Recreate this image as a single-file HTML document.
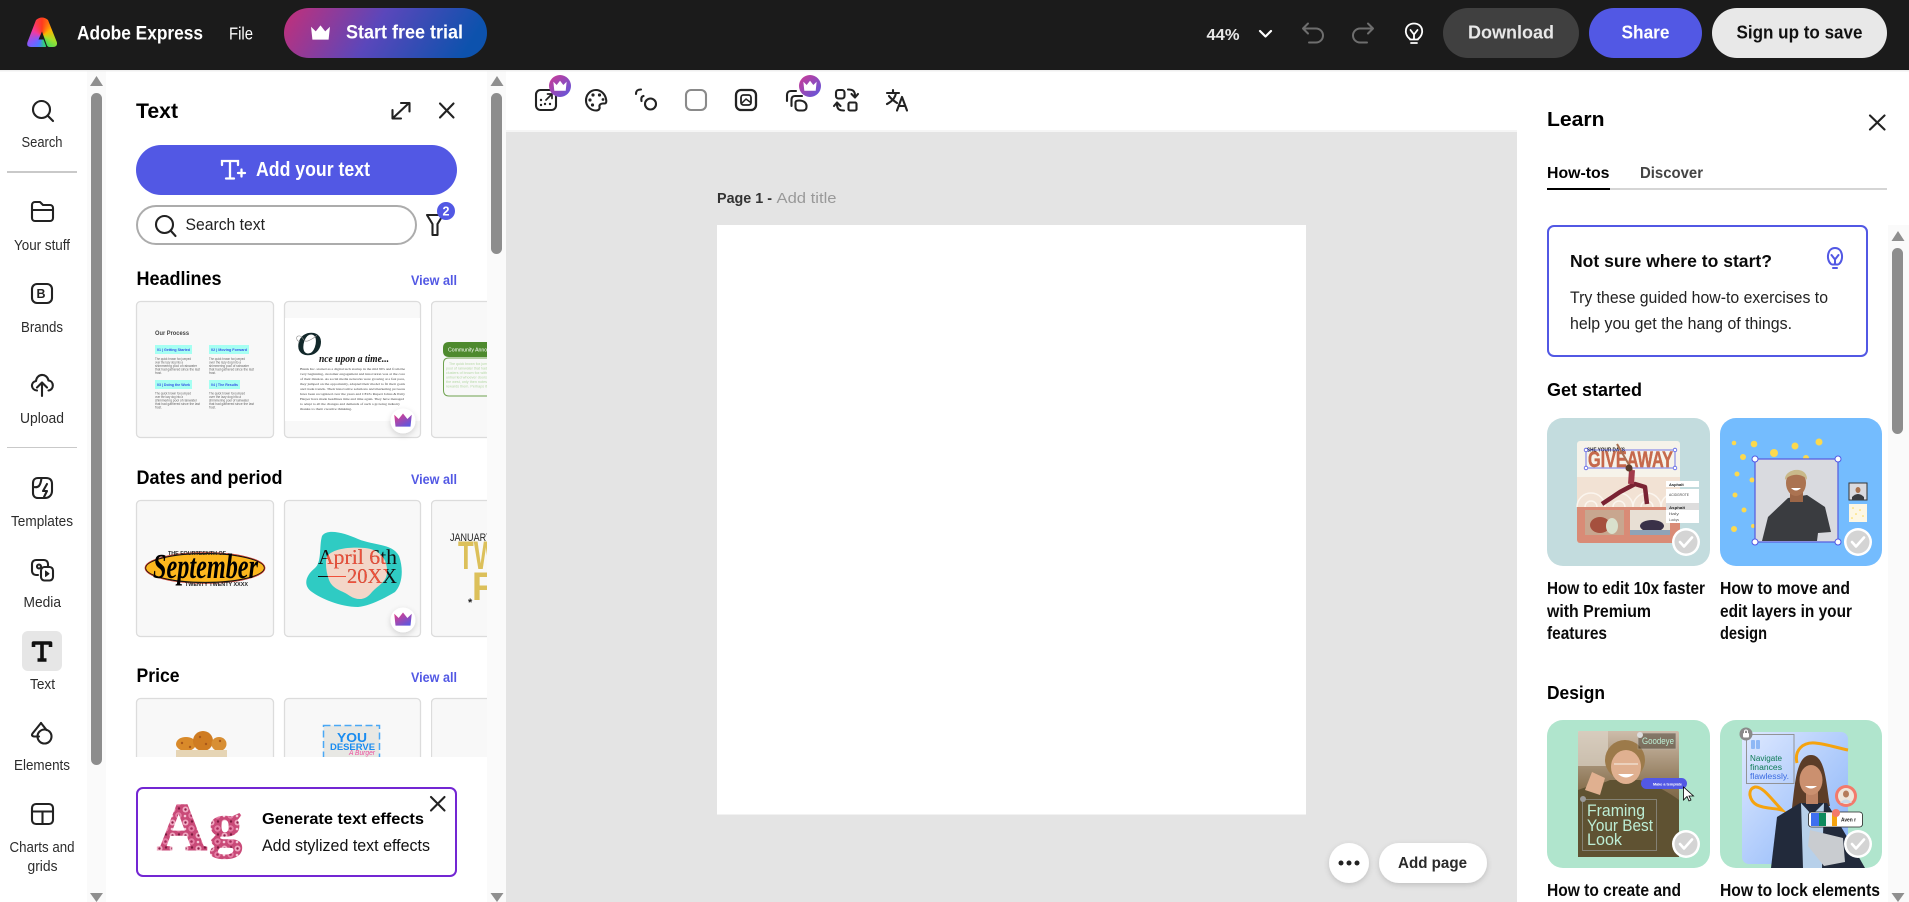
<!DOCTYPE html>
<html lang="en"><head><meta charset="utf-8"><title>Adobe Express</title>
<style>
html,body{margin:0;padding:0;width:1909px;height:902px;overflow:hidden;background:#fff}
svg{display:block}
text{font-family:"Liberation Sans",sans-serif;fill:#222}
.b{font-weight:700}
text.w,.w{fill:#fff}
text.l{font-size:14.5px;fill:#2c2c2c}
text.h{font-size:19px;font-weight:700;fill:#000}
text.va{font-size:13.5px;font-weight:700;fill:#5258e4}
text.c{font-size:17.5px;font-weight:700;fill:#0a0a0a}
.ic{fill:none;stroke:#222;stroke-width:2.1;stroke-linecap:round;stroke-linejoin:round}
.card{fill:#f8f8f8;stroke:#dcdcdc;stroke-width:1.3}
.tiny text{font-size:3.4px;fill:#666}
.tiny2 text{font-size:3.4px;fill:#444;font-family:"Liberation Serif",serif}
.tiny3 text{font-size:3.2px;fill:#b4d8a4}
</style></head><body>
<svg width="1909" height="902" viewBox="0 0 1909 902" xmlns="http://www.w3.org/2000/svg">
<defs>
<linearGradient id="g1" x1="0" x2="1" y1="0" y2=".15"><stop offset="0" stop-color="#c42f78"/><stop offset=".5" stop-color="#5a47bb"/><stop offset="1" stop-color="#0d52ad"/></linearGradient>
<linearGradient id="g2" x1="0" x2="1" y1="0" y2="1"><stop offset="0" stop-color="#cf3a93"/><stop offset="1" stop-color="#5a58e0"/></linearGradient>
<linearGradient id="g3" x1="0" x2=".8" y1="0" y2="1"><stop offset="0" stop-color="#ea3a82"/><stop offset="1" stop-color="#5a58e0"/></linearGradient>
<linearGradient id="ph" x1="0" x2="0" y1="0" y2="1"><stop offset="0" stop-color="#cdbcaa"/><stop offset=".45" stop-color="#8a7352"/><stop offset="1" stop-color="#3d2f1d"/></linearGradient>
<linearGradient id="bl" x1="0" x2="1" y1="0" y2="1"><stop offset="0" stop-color="#dfe9ff"/><stop offset="1" stop-color="#86b2f8"/></linearGradient>
<pattern id="fl" width="13" height="13" patternUnits="userSpaceOnUse"><rect width="13" height="13" fill="#c94a78"/><circle cx="3.500" cy="3.500" r="3" fill="#f0a9c2"/><circle cx="3.500" cy="3.500" r="1.200" fill="#8f1f4a"/><circle cx="9.500" cy="9.500" r="3.200" fill="#e57fa5"/><circle cx="9.500" cy="9.500" r="1.300" fill="#a82a5a"/><circle cx="10" cy="2.500" r="1.200" fill="#7d1b40"/><circle cx="3" cy="10" r="1.300" fill="#f5c7d7"/></pattern>
<path id="cr" d="M-7-5-3.500-1.600 0-6 3.500-1.600 7-5 6 4.500H-6Z" stroke-linejoin="round"/>
<clipPath id="peach"><path d="M327 556C335 548 350 547 365 548C378 549 387 558 387 570C388 582 378 585 372 592C366 600 358 601 350 596C342 590 333 590 329 580C326 572 325 562 327 556Z"/></clipPath>
<clipPath id="col3"><rect x="431" y="290" width="56" height="480"/></clipPath>
<filter id="sh" x="-50%" y="-50%" width="200%" height="200%"><feDropShadow dx="0" dy="2" stdDeviation="3" flood-color="#000" flood-opacity=".16"/></filter>
<g id="chk"><circle r="14" fill="#fff"/><circle r="11.500" fill="#d4d4d4"/><path d="M-6 0-2 4.500 6-4.500" fill="none" stroke="#fff" stroke-width="2.600" stroke-linecap="round" stroke-linejoin="round"/></g>
</defs>

<rect width="1909" height="902" fill="#fff"/>
<!-- canvas -->
<rect x="506" y="132" width="1011" height="770" fill="#e4e4e4"/>
<rect x="506" y="130" width="1011" height="2" fill="#f5f5f5"/>
<rect x="717" y="225" width="589" height="589.500" fill="#fff"/>
<text x="717" y="203" class="b" font-size="15" style="fill:#333" textLength="55" lengthAdjust="spacingAndGlyphs">Page 1 -</text>
<text x="776.500" y="203" font-size="15" style="fill:#999" textLength="60" lengthAdjust="spacingAndGlyphs">Add title</text>
<circle cx="1349" cy="863" r="20" fill="#fff" filter="url(#sh)"/><circle cx="1341" cy="863" r="2.500" fill="#222"/><circle cx="1349" cy="863" r="2.500" fill="#222"/><circle cx="1357" cy="863" r="2.500" fill="#222"/>
<rect x="1379" y="843" width="108" height="40" rx="20" fill="#fff" filter="url(#sh)"/>
<text x="1398" y="868" class="b" font-size="16" style="fill:#2a2a2a" textLength="69" lengthAdjust="spacingAndGlyphs">Add page</text>

<!-- left rail -->
<rect x="87" y="71" width="19" height="831" fill="#fafafa"/>
<path d="M90 86 96.500 76 103 86Z" fill="#8f8f8f"/>
<rect x="91" y="93" width="11" height="672" rx="5.500" fill="#8d8d8d"/>
<path d="M90 893 96.500 902 103 893Z" fill="#8f8f8f"/>
<g class="ic">
<circle cx="41.500" cy="109.500" r="8.500"/><path d="M48 116 53 121"/>
<path d="M32 217V205a3 3 0 0 1 3-3h5l3 3h7a3 3 0 0 1 3 3v10a3 3 0 0 1-3 3H35a3 3 0 0 1-3-3zM32 210H53"/>
<path d="M37 284h10a5 5 0 0 1 5 5v9a5 5 0 0 1-5 5H37a5 5 0 0 1-5-5v-9a5 5 0 0 1 5-5z"/>
<path d="M37 390.500C31 390 30 382.500 36 381C37 373 47 373 48.500 380.500C54 381 54.500 389.500 48.500 390.500M42 396V382.500M37 387.500 42 382.500 47 387.500"/>
<path d="M38 478h8c4 0 6 2 6 6v7c0 4-3 7-7 7h-7c-3 0-5-2-5-5v-10c0-3 2-5 5-5zM33.500 487c5 1 7-1 8-9M47 484l-4 7h4l-3 6" />
<path d="M38 575h-2a4 4 0 0 1-4-4v-7a4 4 0 0 1 4-4h8a4 4 0 0 1 4 4v2"/><circle cx="39" cy="566.500" r="2"/><rect x="41" y="567" width="12" height="13.500" rx="3.500"/><path d="M45.500 571 49 573.700 45.500 576.500Z" fill="#222" stroke-width="1"/>
<path d="M41 723 32.500 733.500Q31 736 34 736.500H39"/><path d="M41 723 46.500 730"/><circle cx="44.500" cy="736.500" r="7"/>
<rect x="32" y="804" width="21" height="20" rx="4"/><path d="M32 811.500H53M42.500 811.500V824"/>
</g>
<text x="36.500" y="298" class="b" font-size="13" style="fill:#222" textLength="9" lengthAdjust="spacingAndGlyphs">B</text>
<rect x="7" y="171" width="70" height="2" fill="#c9c9c9"/>
<rect x="7" y="447" width="70" height="1" fill="#c9c9c9"/>
<rect x="22" y="631" width="40" height="40" rx="6" fill="#e6e6e6"/>
<path d="M33.500 647V643H50.500V647M42 643V659.500M37.500 660H46.500" fill="none" stroke="#111" stroke-width="3.600" stroke-linejoin="round"/>
<text x="21.500" y="147" class="l" textLength="41" lengthAdjust="spacingAndGlyphs">Search</text>
<text x="14" y="250" class="l" textLength="56" lengthAdjust="spacingAndGlyphs">Your stuff</text>
<text x="21" y="332" class="l" textLength="42" lengthAdjust="spacingAndGlyphs">Brands</text>
<text x="20" y="423" class="l" textLength="44" lengthAdjust="spacingAndGlyphs">Upload</text>
<text x="11" y="526" class="l" textLength="62" lengthAdjust="spacingAndGlyphs">Templates</text>
<text x="23.500" y="607" class="l" textLength="37.500" lengthAdjust="spacingAndGlyphs">Media</text>
<text x="30" y="689" class="l" textLength="25" lengthAdjust="spacingAndGlyphs">Text</text>
<text x="14" y="770" class="l" textLength="56" lengthAdjust="spacingAndGlyphs">Elements</text>
<text x="9.500" y="852" class="l" textLength="65" lengthAdjust="spacingAndGlyphs">Charts and</text>
<text x="27.500" y="871" class="l" textLength="30" lengthAdjust="spacingAndGlyphs">grids</text>

<!-- panel -->
<text x="136" y="118" class="b" font-size="21" style="fill:#000" textLength="42" lengthAdjust="spacingAndGlyphs">Text</text>
<path d="M393 118 409 103M401 103H409.500V111.500M392.500 110V118.500H401" class="ic" stroke-width="2.300"/>
<path d="M440 103.500 453.500 117.500M453.500 103.500 440 117.500" class="ic" stroke-width="2.300"/>
<rect x="136" y="145" width="321" height="50" rx="25" fill="#5258e4"/>
<path d="M222 165V161H238V165M230 161V178M226 178.500H234M238 173H245M241.500 169.500V176.500" fill="none" stroke="#fff" stroke-width="2.300" stroke-linecap="round"/>
<text x="256" y="176" class="b w" font-size="20" textLength="114" lengthAdjust="spacingAndGlyphs">Add your text</text>
<rect x="137" y="206" width="279" height="38" rx="19" fill="#fff" stroke="#acacac" stroke-width="2"/>
<circle cx="164.500" cy="224.500" r="8.500" class="ic" stroke-width="2.200"/><path d="M171 231 175.500 236" class="ic" stroke-width="2.200"/>
<text x="185.500" y="230" font-size="16.500" style="fill:#222" textLength="79.500" lengthAdjust="spacingAndGlyphs">Search text</text>
<path d="M427 215H443L437.500 224V235H432.500V224Z" class="ic"/>
<circle cx="446" cy="211" r="9" fill="#5258e4"/>
<text x="442.500" y="215.500" class="b w" font-size="12.500">2</text>

<text x="136.500" y="285" class="h" textLength="85" lengthAdjust="spacingAndGlyphs">Headlines</text>
<text x="411" y="285" class="va" textLength="46" lengthAdjust="spacingAndGlyphs">View all</text>
<text x="136.500" y="484" class="h" textLength="146" lengthAdjust="spacingAndGlyphs">Dates and period</text>
<text x="411" y="484" class="va" textLength="46" lengthAdjust="spacingAndGlyphs">View all</text>
<text x="136.500" y="682" class="h" textLength="43" lengthAdjust="spacingAndGlyphs">Price</text>
<text x="411" y="682" class="va" textLength="46" lengthAdjust="spacingAndGlyphs">View all</text>

<!-- row 1 -->
<rect x="136.500" y="301.500" width="137" height="136" rx="4" class="card"/>
<rect x="284.500" y="301.500" width="136" height="136" rx="4" class="card"/>
<g clip-path="url(#col3)"><rect x="431.500" y="301.500" width="136" height="136" rx="4" class="card"/></g>
<text x="155" y="335" class="b" font-size="6" style="fill:#444" textLength="34" lengthAdjust="spacingAndGlyphs">Our Process</text>
<g fill="#a6fff2"><rect x="155" y="345" width="37" height="9"/><rect x="209" y="345" width="40" height="9"/><rect x="155" y="380" width="37" height="9"/><rect x="209" y="380" width="31" height="9"/></g>
<g font-size="3.700" style="font-weight:700">
<text x="157" y="351" style="fill:#3553e8" textLength="33" lengthAdjust="spacingAndGlyphs">01 | Getting Started</text>
<text x="211" y="351" style="fill:#3553e8" textLength="36" lengthAdjust="spacingAndGlyphs">02 | Moving Forward</text>
<text x="157" y="386" style="fill:#3553e8" textLength="33" lengthAdjust="spacingAndGlyphs">03 | Doing the Work</text>
<text x="211" y="386" style="fill:#3553e8" textLength="27" lengthAdjust="spacingAndGlyphs">04 | The Results</text>
</g>
<g class="tiny">
<text x="155" y="360" textLength="36" lengthAdjust="spacingAndGlyphs">The quick brown fox jumped</text>
<text x="155" y="363.500" textLength="28" lengthAdjust="spacingAndGlyphs">over the lazy dog into a</text>
<text x="155" y="367" textLength="42" lengthAdjust="spacingAndGlyphs">shimmering pool of rainwater</text>
<text x="155" y="370.500" textLength="45" lengthAdjust="spacingAndGlyphs">that had gathered since the last</text>
<text x="155" y="374" textLength="7" lengthAdjust="spacingAndGlyphs">frost.</text>
<text x="209" y="360" textLength="36" lengthAdjust="spacingAndGlyphs">The quick brown fox jumped</text>
<text x="209" y="363.500" textLength="32" lengthAdjust="spacingAndGlyphs">over the lazy dog into a</text>
<text x="209" y="367" textLength="40" lengthAdjust="spacingAndGlyphs">shimmering pool of rainwater</text>
<text x="209" y="370.500" textLength="45" lengthAdjust="spacingAndGlyphs">that had gathered since the last</text>
<text x="209" y="374" textLength="7" lengthAdjust="spacingAndGlyphs">frost.</text>
<text x="155" y="394.500" textLength="36" lengthAdjust="spacingAndGlyphs">The quick brown fox jumped</text>
<text x="155" y="398" textLength="28" lengthAdjust="spacingAndGlyphs">over the lazy dog into a</text>
<text x="155" y="401.500" textLength="42" lengthAdjust="spacingAndGlyphs">shimmering pool of rainwater</text>
<text x="155" y="405" textLength="45" lengthAdjust="spacingAndGlyphs">that had gathered since the last</text>
<text x="155" y="408.500" textLength="7" lengthAdjust="spacingAndGlyphs">frost.</text>
<text x="209" y="394.500" textLength="36" lengthAdjust="spacingAndGlyphs">The quick brown fox jumped</text>
<text x="209" y="398" textLength="32" lengthAdjust="spacingAndGlyphs">over the lazy dog into a</text>
<text x="209" y="401.500" textLength="40" lengthAdjust="spacingAndGlyphs">shimmering pool of rainwater</text>
<text x="209" y="405" textLength="45" lengthAdjust="spacingAndGlyphs">that had gathered since the last</text>
<text x="209" y="408.500" textLength="7" lengthAdjust="spacingAndGlyphs">frost.</text>
</g>
<rect x="285" y="318" width="135" height="103" fill="#fff"/>
<text x="297" y="355" font-size="34" style="font-family:'Liberation Serif',serif;font-style:italic;fill:#12282a" class="b" textLength="25" lengthAdjust="spacingAndGlyphs">O</text>
<path d="M300 342C295 340 296 335 300 336C304 337 303 344 310 340C316 337 318 334 316 336" fill="none" stroke="#888" stroke-width=".6"/>
<text x="319" y="362" font-size="10" style="font-family:'Liberation Serif',serif;font-style:italic;fill:#111" class="b" textLength="70" lengthAdjust="spacingAndGlyphs">nce upon a time...</text>
<g class="tiny2">
<text x="300" y="370" textLength="105" lengthAdjust="spacingAndGlyphs">Blank Inc. started as a digital tech startup in the mid 90's and from the</text>
<text x="300" y="375" textLength="105" lengthAdjust="spacingAndGlyphs">very beginning, customer engagement and innovation was at the core</text>
<text x="300" y="380" textLength="105" lengthAdjust="spacingAndGlyphs">of their mission. As social media networks were growing at a fast pace,</text>
<text x="300" y="385" textLength="105" lengthAdjust="spacingAndGlyphs">they jumped on the opportunity, adapted their model to fit their goals</text>
<text x="300" y="390" textLength="105" lengthAdjust="spacingAndGlyphs">and trade trends. Their innovative solutions and marketing prowess</text>
<text x="300" y="395" textLength="105" lengthAdjust="spacingAndGlyphs">have been recognized over the years and CEO's Rupert Johns &amp; Patty</text>
<text x="300" y="400" textLength="104" lengthAdjust="spacingAndGlyphs">Harper have made headlines time and time again. They have managed</text>
<text x="300" y="405" textLength="100" lengthAdjust="spacingAndGlyphs">to adapt to all the changes and demands of such a growing industry</text>
<text x="300" y="410" textLength="52" lengthAdjust="spacingAndGlyphs">thanks to their creative thinking.</text>
</g>
<g clip-path="url(#col3)">
<path d="M449 342H490V357H449Q443 357 443 351V348Q443 342 449 342Z" fill="#4e8a2e"/>
<text x="448" y="351.500" font-size="5" class="w" textLength="42" lengthAdjust="spacingAndGlyphs">Community Annou</text>
<path d="M490 358H449Q443.500 358 443.500 363V390Q443.500 396 449 396H490" fill="none" stroke="#6ea24e" stroke-width="1"/>
<g class="tiny3">
<text x="449" y="365" textLength="38" lengthAdjust="spacingAndGlyphs">The quick brown fox jum</text>
<text x="446" y="369.500" textLength="41" lengthAdjust="spacingAndGlyphs">pool of rainwater that had</text>
<text x="446" y="374" textLength="41" lengthAdjust="spacingAndGlyphs">clusters of brown fox with</text>
<text x="446" y="378.500" textLength="41" lengthAdjust="spacingAndGlyphs">unhurried whoever doors</text>
<text x="446" y="383" textLength="41" lengthAdjust="spacingAndGlyphs">the west, only then notes</text>
<text x="446" y="387.500" textLength="41" lengthAdjust="spacingAndGlyphs">rewards them. Perhaps it</text>
</g>
</g>
<circle cx="403" cy="421" r="12.500" fill="#fff" filter="url(#sh)"/>
<use href="#cr" transform="translate(403 421) scale(1.250)" fill="url(#g3)"/>

<!-- row 2 -->
<rect x="136.500" y="500.500" width="137" height="136" rx="4" class="card"/>
<rect x="284.500" y="500.500" width="136" height="136" rx="4" class="card"/>
<g clip-path="url(#col3)"><rect x="431.500" y="500.500" width="136" height="136" rx="4" class="card"/></g>
<ellipse cx="205" cy="568" rx="59.500" ry="14.500" fill="#fdb71e" stroke="#111" stroke-width="1.200"/>
<ellipse cx="205" cy="568" rx="60" ry="15.500" fill="none" stroke="#c83a2a" stroke-width=".7"/>
<text x="168" y="555" class="b" font-size="5.500" style="fill:#222" textLength="58" lengthAdjust="spacingAndGlyphs">THE FOURTEENTH OF</text>
<text x="153" y="578" font-size="35" style="font-family:'Liberation Serif',serif;font-style:italic;fill:#000" class="b" textLength="105" lengthAdjust="spacingAndGlyphs">September</text>
<text x="185" y="586" class="b" font-size="5.500" style="fill:#222" textLength="63" lengthAdjust="spacingAndGlyphs">TWENTY TWENTY XXXX</text>
<path d="M322 536C327 528 345 533 358 539C375 546 392 543 399 556C404 570 402 585 395 592C385 598 370 606 358 607C340 607 320 598 312 592C303 586 305 576 315 568C322 562 319 546 322 536Z" fill="#2fcbc3"/>
<path d="M327 556C335 548 350 547 365 548C378 549 387 558 387 570C388 582 378 585 372 592C366 600 358 601 350 596C342 590 333 590 329 580C326 572 325 562 327 556Z" fill="#f3d6c8"/>
<g font-size="21">
<text x="318" y="564" style="font-family:'Liberation Serif',serif;fill:#111" textLength="79" lengthAdjust="spacingAndGlyphs">April 6th</text>
<text x="347" y="583" style="font-family:'Liberation Serif',serif;fill:#111" textLength="50" lengthAdjust="spacingAndGlyphs">20XX</text>
<rect x="318" y="576" width="28" height="1" fill="#111"/>
<g clip-path="url(#peach)">
<text x="318" y="564" style="font-family:'Liberation Serif',serif;fill:#f0503a" textLength="79" lengthAdjust="spacingAndGlyphs">April 6th</text>
<text x="347" y="583" style="font-family:'Liberation Serif',serif;fill:#f0503a" textLength="50" lengthAdjust="spacingAndGlyphs">20XX</text>
<rect x="318" y="576" width="28" height="1" fill="#f0503a"/>
</g></g>
<circle cx="403" cy="620" r="12.500" fill="#fff" filter="url(#sh)"/>
<use href="#cr" transform="translate(403 620) scale(1.250)" fill="url(#g3)"/>
<g clip-path="url(#col3)">
<text x="450" y="541" font-size="11" style="fill:#222" textLength="42" lengthAdjust="spacingAndGlyphs">JANUARY</text>
<text x="458" y="569" class="b" font-size="40" style="fill:#dcc05a" textLength="40" lengthAdjust="spacingAndGlyphs">TW</text>
<text x="472" y="600" class="b" font-size="40" style="fill:#dcc05a" textLength="22" lengthAdjust="spacingAndGlyphs">F</text>
<text x="468" y="606" class="b" font-size="11" style="fill:#222">*</text>
</g>

<!-- row 3 -->
<rect x="136.500" y="698.500" width="137" height="100" rx="4" class="card"/>
<rect x="284.500" y="698.500" width="136" height="100" rx="4" class="card"/>
<g clip-path="url(#col3)"><rect x="431.500" y="698.500" width="136" height="100" rx="4" class="card"/></g>
<ellipse cx="186" cy="744" rx="10" ry="7" fill="#d98a2a"/><ellipse cx="203" cy="741" rx="10" ry="10" fill="#cf7c22"/><ellipse cx="219" cy="744" rx="7.500" ry="7" fill="#d88f34"/>
<g fill="#a9581a"><circle cx="182" cy="743" r="1.200"/><circle cx="190" cy="747" r="1.200"/><circle cx="200" cy="737" r="1.200"/><circle cx="206" cy="744" r="1.200"/><circle cx="220" cy="741" r="1.200"/></g>
<rect x="176" y="750" width="51" height="8" fill="#e6d5b5"/>
<rect x="323.500" y="725.500" width="56" height="34" fill="#e8e8e4" stroke="#4aa8f5" stroke-width="1.500" stroke-dasharray="7 3.500"/>
<text x="337" y="742" class="b" font-size="13" style="fill:#1a8cf0" textLength="30" lengthAdjust="spacingAndGlyphs">YOU</text>
<text x="330" y="750" class="b" font-size="9.500" style="fill:#1a8cf0" textLength="45" lengthAdjust="spacingAndGlyphs">DESERVE</text>
<text x="349" y="755" font-size="7" style="fill:#ec4f9e;font-style:italic" textLength="26" lengthAdjust="spacingAndGlyphs">A Burger</text>
<!-- cover below row 3 -->
<rect x="106" y="757" width="381" height="145" fill="#fff"/>
<!-- promo -->
<rect x="137" y="788" width="319" height="88" rx="6" fill="#fff" stroke="#7326d3" stroke-width="2"/>
<text x="157" y="850" class="b" font-size="68" style="font-family:'Liberation Serif',serif;fill:url(#fl);stroke:url(#fl);stroke-width:1.500px" textLength="50" lengthAdjust="spacingAndGlyphs">A</text>
<text x="209" y="845" class="b" font-size="60" style="font-family:'Liberation Serif',serif;fill:url(#fl);stroke:url(#fl);stroke-width:1.500px" textLength="33" lengthAdjust="spacingAndGlyphs">g</text>
<text x="262" y="824" class="b" font-size="16" style="fill:#000" textLength="162" lengthAdjust="spacingAndGlyphs">Generate text effects</text>
<text x="262" y="851" font-size="16.500" style="fill:#111" textLength="168" lengthAdjust="spacingAndGlyphs">Add stylized text effects</text>
<path d="M431 797 444.500 810.500M444.500 797 431 810.500" class="ic" stroke-width="2.300"/>
<!-- panel scrollbar -->
<rect x="487" y="71" width="19" height="831" fill="#fafafa"/>
<path d="M490.500 86 497 76 503.500 86Z" fill="#8f8f8f"/>
<rect x="491" y="93" width="11" height="161" rx="5.500" fill="#8d8d8d"/>
<path d="M490.500 893 497 902 503.500 893Z" fill="#8f8f8f"/>

<!-- canvas toolbar icons -->
<g class="ic">
<rect x="536" y="90" width="20" height="20" rx="4.500"/><path d="M546 100 552 94M547.500 94H552V98.500" stroke-width="1.700"/><g fill="#222" stroke="none"><circle cx="541" cy="100" r="1.200"/><circle cx="545" cy="104" r="1.200"/><circle cx="541" cy="105" r="1.200"/><circle cx="550" cy="104" r="1.200"/></g>
<path d="M596 90C590 90 586 95 586 100.500C586 106 590.500 110.500 596 110.500C599 110.500 600 108.500 599.500 107C599 105 600.500 103.500 603 103.500H604.500C606 103.500 606.800 102 606 99C605 94 601 90 596 90Z"/><g fill="#222" stroke="none"><circle cx="593" cy="95" r="1.600"/><circle cx="599.500" cy="95" r="1.600"/><circle cx="590" cy="100" r="1.600"/><circle cx="603" cy="99.500" r="1.400"/><circle cx="592.500" cy="105" r="1.600"/></g>
<circle cx="650.500" cy="104" r="5.500"/><path d="M641 89.500C637 89.500 636 91 636 94M643.500 96C641.500 96.500 641 98.500 641.500 101"/>
<rect x="686" y="90" width="20" height="20" rx="5" stroke="#8a8a8a"/>
<rect x="736" y="90" width="20" height="20" rx="5" stroke-width="2.300"/><rect x="741" y="95" width="10" height="10" rx="2.500" stroke-width="1.800"/><path d="M742 103 746 99 750 102" stroke-width="1.500"/>
<path d="M796 91H791C788.500 91 787 92.500 787 95V101M802 96H795C792.500 96 791.500 97.500 791.500 100V106"/><path d="M799 100.500H799C805 100.500 806.500 104 806.500 106V107C806.500 109 805 110.500 803 110.500H799C797 110.500 795.500 109 795.500 107V102.500C795.500 101 797 100.500 799 100.500Z"/>
<rect x="836" y="90" width="8.500" height="8.500" rx="2.500"/><rect x="848.500" y="102.500" width="8" height="8" rx="1.500"/><path d="M848 89.500C853 89.500 855 91 855 96M851.500 94 855 97.500 858 94M844 110.500C839 110.500 837 109 837 104M840.500 106 837 102.500 834 106"/>
<path d="M887 93H899M893 90V93M896 93C895 99 891 102 887 104M889 96C891 99 894 101 897 103"/><path d="M897 110.500 902 97 907 110.500M899 106H905"/>
</g>
<circle cx="560" cy="86" r="11" fill="url(#g2)"/><use href="#cr" transform="translate(560 86.500) scale(.95)" fill="#fff"/>
<circle cx="810" cy="86" r="11" fill="url(#g2)"/><use href="#cr" transform="translate(810 86.500) scale(.95)" fill="#fff"/>

<!-- right panel -->
<rect x="1517" y="71" width="392" height="831" fill="#fff"/>
<text x="1547" y="126" class="b" font-size="20.500" style="fill:#000" textLength="57.500" lengthAdjust="spacingAndGlyphs">Learn</text>
<path d="M1870 115.500 1884.500 129.500M1884.500 115.500 1870 129.500" class="ic" stroke-width="2"/>
<text x="1547" y="178" class="b" font-size="16" style="fill:#000" textLength="62.500" lengthAdjust="spacingAndGlyphs">How-tos</text>
<text x="1640" y="178" class="b" font-size="16" style="fill:#444" textLength="63" lengthAdjust="spacingAndGlyphs">Discover</text>
<rect x="1547" y="188" width="340" height="2" fill="#d5d5d5"/>
<rect x="1547" y="188" width="63" height="2" fill="#000"/>
<rect x="1548" y="226" width="319" height="130" rx="6" fill="#fff" stroke="#5258e4" stroke-width="2"/>
<text x="1570" y="267" class="b" font-size="17.500" style="fill:#0a0a0a" textLength="202" lengthAdjust="spacingAndGlyphs">Not sure where to start?</text>
<text x="1570" y="303" font-size="16.500" style="fill:#222" textLength="258" lengthAdjust="spacingAndGlyphs">Try these guided how-to exercises to</text>
<text x="1570" y="329" font-size="16.500" style="fill:#222" textLength="222" lengthAdjust="spacingAndGlyphs">help you get the hang of things.</text>
<path d="M1831 264C1826 260 1827 248 1835 248C1843 248 1844 260 1839 264M1832 264.500H1838M1833 268H1837M1831.500 255 1835 259.500 1838.500 255M1835 259V264" fill="none" stroke="#5258e4" stroke-width="2" stroke-linecap="round" stroke-linejoin="round"/>
<text x="1547" y="396" class="b" font-size="18" style="fill:#000" textLength="95" lengthAdjust="spacingAndGlyphs">Get started</text>
<text x="1547" y="699" class="b" font-size="18" style="fill:#000" textLength="58" lengthAdjust="spacingAndGlyphs">Design</text>

<!-- card A -->
<rect x="1547" y="418" width="163" height="148" rx="16" fill="#c3dcde"/>
<rect x="1577" y="441" width="103" height="102" rx="3" fill="#f6f3ea"/>
<rect x="1577" y="477" width="103" height="30" fill="#f2e2d4"/>
<path d="M1577 507a14 14 0 0 1 28 0M1605 507a14 14 0 0 1 28 0M1633 507a14 14 0 0 1 28 0M1661 507a14 14 0 0 1 19-13M1585 507a6 6 0 0 1 12 0M1613 507a6 6 0 0 1 12 0M1641 507a6 6 0 0 1 12 0" fill="none" stroke="#fbf5ee" stroke-width="1.500"/>
<path d="M1577 507H1680V540a3 3 0 0 1-3 3H1580a3 3 0 0 1-3-3Z" fill="#d98b76"/>
<text x="1587" y="451.500" class="b" font-size="5" style="fill:#111" textLength="38" lengthAdjust="spacingAndGlyphs">SHE YOUR DAYS</text>
<text x="1588" y="467" class="b" font-size="22" style="fill:#c6694c;stroke:#c6694c;stroke-width:.5px" textLength="85" lengthAdjust="spacingAndGlyphs">GIVEAWAY</text>
<rect x="1586" y="450" width="89" height="18" fill="none" stroke="#5258e4" stroke-width=".8"/>
<g fill="#fff" stroke="#5258e4" stroke-width=".8"><circle cx="1586" cy="450" r="1.800"/><circle cx="1675" cy="450" r="1.800"/><circle cx="1586" cy="468" r="1.800"/><circle cx="1675" cy="468" r="1.800"/></g>
<path d="M1602 504 1620 492 1635 484 1645 487 1647 504" fill="none" stroke="#7a2232" stroke-width="4.500" stroke-linejoin="round"/>
<path d="M1631 484 1632 470" stroke="#a13a4a" stroke-width="6"/><path d="M1632 470 1617 444" stroke="#a86f50" stroke-width="2"/><circle cx="1629" cy="468" r="3.500" fill="#5a3a2a"/>
<rect x="1585" y="510" width="39" height="25" fill="#c8a68f"/><ellipse cx="1600" cy="525" rx="10" ry="8" fill="#a5503e"/><ellipse cx="1612" cy="526" rx="6" ry="8" fill="#d9e0cc"/>
<rect x="1630" y="510" width="40" height="25" fill="#e8dfd4"/><ellipse cx="1652" cy="526" rx="12" ry="6" fill="#3a3148"/><rect x="1630" y="530" width="40" height="5" fill="#8fa3b8"/>
<rect x="1666" y="481" width="33" height="6" fill="#fff"/><rect x="1666" y="489" width="33" height="34" fill="#fff"/><rect x="1666" y="503" width="33" height="7" fill="#ddd"/>
<g font-size="4" style="font-weight:700"><text x="1669" y="486" style="fill:#222">Asphalt</text><text x="1669" y="496" style="fill:#444;font-weight:400" textLength="20" lengthAdjust="spacingAndGlyphs">ACIDGROTE</text><text x="1669" y="509" style="fill:#222" textLength="16" lengthAdjust="spacingAndGlyphs">Asphalt</text><text x="1669" y="515" style="fill:#555;font-weight:400" textLength="10" lengthAdjust="spacingAndGlyphs">Italy</text><text x="1669" y="521" style="fill:#555;font-weight:400" textLength="10" lengthAdjust="spacingAndGlyphs">Luckys</text></g>
<use href="#chk" transform="translate(1686 542)"/>

<!-- card B -->
<rect x="1720" y="418" width="162" height="148" rx="16" fill="#74bcfe"/>
<g fill="#fcd94e"><circle cx="1734" cy="443" r="2.300"/><circle cx="1754" cy="444" r="3.300"/><circle cx="1795" cy="446" r="3.500"/><circle cx="1819" cy="442" r="3.500"/><circle cx="1774" cy="453" r="4"/><circle cx="1743" cy="457" r="3"/><circle cx="1737" cy="474" r="2.500"/><circle cx="1752" cy="480" r="2.500"/><circle cx="1735" cy="495" r="2.500"/><circle cx="1744" cy="510" r="2.500"/><circle cx="1734" cy="529" r="3"/><circle cx="1753" cy="526" r="2"/><circle cx="1806" cy="458" r="3"/></g>
<rect x="1755" y="459" width="83" height="83" fill="#d9dadf"/>
<path d="M1762 541 1768 517 1788 498 1807 495 1825 507 1831 532 1818 533 1817 541Z" fill="#3a3c40"/>
<rect x="1790" y="490" width="13" height="12" fill="#9c6647"/>
<ellipse cx="1796" cy="483" rx="10" ry="13" fill="#ab7351"/>
<path d="M1785 480C1784 468 1808 465 1807 480C1803 473 1790 473 1785 480Z" fill="#c9b98a"/>
<path d="M1791 488Q1796 493 1801 488Z" fill="#fff"/>
<rect x="1755" y="459" width="83" height="83" fill="none" stroke="#5a62e0" stroke-width="1.300"/>
<g fill="#fff" stroke="#5258e4" stroke-width="1"><circle cx="1755" cy="459" r="3"/><circle cx="1838" cy="459" r="3"/><circle cx="1755" cy="542" r="3"/><circle cx="1838" cy="542" r="3"/></g>
<rect x="1849" y="483" width="18" height="17" fill="#d9dadf" stroke="#333" stroke-width="1"/><ellipse cx="1858" cy="490" rx="2.500" ry="3" fill="#a8714e"/><path d="M1852 500V497Q1858 491 1864 497V500Z" fill="#3a3c40"/>
<rect x="1849" y="504" width="18" height="18" fill="#fdf7e4"/>
<g fill="#fcd94e"><circle cx="1853" cy="508" r=".8"/><circle cx="1860" cy="510" r=".8"/><circle cx="1856" cy="514" r=".8"/><circle cx="1863" cy="516" r=".8"/><circle cx="1852" cy="518" r=".8"/></g>
<use href="#chk" transform="translate(1858 542)"/>

<!-- card captions -->
<text x="1547" y="594" class="c" textLength="158" lengthAdjust="spacingAndGlyphs">How to edit 10x faster</text>
<text x="1547" y="617" class="c" textLength="104" lengthAdjust="spacingAndGlyphs">with Premium</text>
<text x="1547" y="639" class="c" textLength="60" lengthAdjust="spacingAndGlyphs">features</text>
<text x="1720" y="594" class="c" textLength="130" lengthAdjust="spacingAndGlyphs">How to move and</text>
<text x="1720" y="617" class="c" textLength="132" lengthAdjust="spacingAndGlyphs">edit layers in your</text>
<text x="1720" y="639" class="c" textLength="47" lengthAdjust="spacingAndGlyphs">design</text>

<!-- design A -->
<rect x="1547" y="720" width="163" height="148" rx="16" fill="#b0e5cd"/>
<rect x="1578" y="731" width="101" height="126" rx="2" fill="url(#ph)"/>
<rect x="1578" y="731" width="30" height="35" fill="#dcd3c6" opacity=".7"/>
<path d="M1578 790C1590 785 1600 785 1610 780L1640 780C1655 785 1665 790 1679 800V857H1578Z" fill="#5f5232"/>
<ellipse cx="1625" cy="760" rx="20" ry="20" fill="#9c7a4a"/>
<ellipse cx="1626" cy="767" rx="15" ry="17" fill="#e0b090"/>
<path d="M1614 764H1638" stroke="#f6efe6" stroke-width="1.500" opacity=".7"/><path d="M1618 774Q1626 781 1634 774Z" fill="#fff"/>
<path d="M1585 790 1592 772 1605 778 1600 795Z" fill="#e0b090"/>
<rect x="1582.500" y="799.500" width="74" height="51" fill="none" stroke="#8e8e86" stroke-width=".8"/>
<text x="1587" y="816" font-size="16.500" style="fill:#bdeed5" textLength="58" lengthAdjust="spacingAndGlyphs">Framing</text>
<text x="1587" y="831" font-size="16.500" style="fill:#bdeed5" textLength="66" lengthAdjust="spacingAndGlyphs">Your Best</text>
<text x="1587" y="845" font-size="16.500" style="fill:#bdeed5" textLength="35" lengthAdjust="spacingAndGlyphs">Look</text>
<rect x="1638" y="733" width="38" height="16" fill="#2f2a1f" opacity=".45" stroke="#bbb" stroke-width=".7"/>
<text x="1642" y="744" font-size="9" style="fill:#bdeed5" textLength="32" lengthAdjust="spacingAndGlyphs">Goodeye</text>
<rect x="1641" y="778" width="46" height="11" rx="5.500" fill="#5258e4"/>
<text x="1653" y="785.500" font-size="4" class="b w" textLength="29" lengthAdjust="spacingAndGlyphs">Make a template</text>
<path d="M1683.500 787V800L1687 796.500 1689 801 1691 800 1689 796H1693.500Z" fill="#fff" stroke="#000" stroke-width=".8"/>
<circle cx="1583" cy="799" r="3" fill="#9a9a9a"/><circle cx="1640" cy="735" r="3" fill="#ddd"/>
<use href="#chk" transform="translate(1686 844)"/>

<!-- design B -->
<rect x="1720" y="720" width="162" height="148" rx="16" fill="#b0e5cd"/>
<rect x="1742" y="732" width="106" height="132" rx="7" fill="url(#bl)"/>
<rect x="1746.500" y="734.500" width="47.500" height="49" fill="none" stroke="#8c8c8c" stroke-width=".9"/>
<path d="M1797 763C1794 750 1803 742 1815 743C1826 744 1838 748 1848 750" fill="none" stroke="#f5a30f" stroke-width="3"/>
<path d="M1782 810C1772 800 1763 786 1755 787C1747 789 1749 801 1757 805C1765 809 1775 808 1782 810Z" fill="none" stroke="#f5a30f" stroke-width="3"/>
<rect x="1751" y="740" width="4" height="9" rx="1" fill="#8fb8f5"/><rect x="1756" y="740" width="4" height="9" rx="1" fill="#8fb8f5"/>
<text x="1750" y="761" font-size="8" style="fill:#0d7a55" textLength="32" lengthAdjust="spacingAndGlyphs">Navigate</text>
<text x="1750" y="770" font-size="8" style="fill:#0d7a55" textLength="32" lengthAdjust="spacingAndGlyphs">finances</text>
<text x="1750" y="779" font-size="8" style="fill:#3a6ae0" textLength="39" lengthAdjust="spacingAndGlyphs">flawlessly.</text>
<circle cx="1746" cy="734" r="6.500" fill="#8a8a8a"/><rect x="1743" y="733" width="6" height="4.500" rx="1" fill="#fff"/><path d="M1744.500 733V731.500a1.500 1.500 0 0 1 3 0V733" fill="none" stroke="#fff"/>
<path d="M1792 808C1795 785 1796 755 1811 755C1826 755 1826 785 1830 806Z" fill="#5c3d28"/>
<path d="M1771 868 1777 817 1800 803 1827 803 1853 847 1865 868Z" fill="#222a3b"/>
<path d="M1801 803 1812 815 1824 803 1822 868H1803Z" fill="#b7d0ea"/>
<rect x="1806" y="790" width="12" height="14" fill="#bd8263"/>
<ellipse cx="1811" cy="780" rx="11.500" ry="15" fill="#cb906f"/>
<path d="M1805 786Q1811 791 1817 786Z" fill="#fff"/>
<path d="M1810 830 1843 838 1845 862 1824 866 1808 846Z" fill="#c9ccd0"/>
<rect x="1808.500" y="812" width="54" height="15" rx="3" fill="#fff" stroke="#222" stroke-width=".8"/>
<rect x="1811" y="813" width="8" height="13" fill="#3f6ff0"/><rect x="1819" y="813" width="7" height="13" fill="#0e8a5c"/><rect x="1826" y="813" width="6" height="13" fill="#f5f5f5"/><rect x="1832" y="813" width="5" height="13" fill="#f5a30f"/>
<text x="1841" y="821.500" font-size="5" class="b" style="fill:#222" textLength="15" lengthAdjust="spacingAndGlyphs">Aven r</text>
<circle cx="1846" cy="796" r="11" fill="#f37a6b"/><circle cx="1846" cy="796" r="8" fill="#efe6da"/><ellipse cx="1846" cy="794" rx="3" ry="3.500" fill="#b57c5a"/><path d="M1840 803Q1846 796 1852 803Z" fill="#c9d9e8"/>
<circle cx="1836" cy="813" r="4" fill="#f37a6b"/>
<use href="#chk" transform="translate(1858 844)"/>
<rect x="1547" y="868" width="340" height="34" fill="#fff"/>
<text x="1547" y="896" class="c" textLength="134" lengthAdjust="spacingAndGlyphs">How to create and</text>
<text x="1720" y="896" class="c" textLength="160" lengthAdjust="spacingAndGlyphs">How to lock elements</text>

<!-- right scrollbar -->
<rect x="1888" y="225" width="21" height="677" fill="#fafafa"/>
<path d="M1891.500 241 1898 231 1904.500 241Z" fill="#8f8f8f"/>
<rect x="1892" y="248" width="11" height="186" rx="5.500" fill="#8d8d8d"/>
<path d="M1891.500 893 1898 902 1904.500 893Z" fill="#8f8f8f"/>

<!-- top bar -->
<rect width="1909" height="70" fill="#1b1b1b"/>
<rect y="70" width="1909" height="1.500" fill="#efefef"/>
<foreignObject x="27" y="17" width="31" height="31"><div xmlns="http://www.w3.org/1999/xhtml" style="width:31px;height:31px;background:conic-gradient(from 0deg at 15px 19px,#ff3a1e 0deg,#ffb400 55deg,#a5e02a 110deg,#2fd96b 160deg,#4a7bff 200deg,#7d5cff 235deg,#f23aa0 300deg,#ff3a1e 360deg);clip-path:path('M9 3Q15 -2 21 3L29.800 25Q31 30 26 30H22.500Q20.500 30 19.800 28L15 14.500 11.500 22.500H16.500L19 29Q19.500 30 17.500 30H4Q-1 30 .5 25Z')"></div></foreignObject>
<text x="77" y="39.500" class="b w" font-size="19" textLength="126" lengthAdjust="spacingAndGlyphs">Adobe Express</text>
<text x="229" y="39.500" class="w" font-size="17.500" textLength="24" lengthAdjust="spacingAndGlyphs">File</text>
<rect x="284" y="8" width="203" height="50" rx="25" fill="url(#g1)"/>
<use href="#cr" transform="translate(320.500 33.500) scale(1.350)" fill="#fff"/>
<text x="346" y="38.500" class="b w" font-size="19" textLength="117" lengthAdjust="spacingAndGlyphs">Start free trial</text>
<text x="1206.500" y="40" class="b" font-size="16" style="fill:#e8e8e8" textLength="33" lengthAdjust="spacingAndGlyphs">44%</text>
<path d="M1260 31 1265.500 36.500 1271 31" fill="none" stroke="#fff" stroke-width="2.200" stroke-linecap="round" stroke-linejoin="round"/>
<path d="M1308 23.500 1303 28.500 1308 33.500M1303 28.500H1316A7 7 0 0 1 1316 42.500H1309" fill="none" stroke="#6e6e6e" stroke-width="2" stroke-linecap="round" stroke-linejoin="round"/>
<path d="M1368 23.500 1373 28.500 1368 33.500M1373 28.500H1360A7 7 0 0 0 1360 42.500H1367" fill="none" stroke="#6e6e6e" stroke-width="2" stroke-linecap="round" stroke-linejoin="round"/>
<path d="M1410 39C1403 34 1405 23.500 1414 23.500C1423 23.500 1425 34 1418 39M1410 39.500H1418M1411 43H1417M1410.500 30 1414 34.500 1417.500 30M1414 34V39" fill="none" stroke="#fff" stroke-width="1.800" stroke-linecap="round" stroke-linejoin="round"/>
<rect x="1443" y="8" width="136" height="50" rx="25" fill="#404040"/>
<text x="1468" y="38.500" class="b" font-size="18" style="fill:#e8e8e8" textLength="86" lengthAdjust="spacingAndGlyphs">Download</text>
<rect x="1589" y="8" width="113" height="50" rx="25" fill="#5258e4"/>
<text x="1621.500" y="38.500" class="b w" font-size="18" textLength="48" lengthAdjust="spacingAndGlyphs">Share</text>
<rect x="1712" y="8" width="175" height="50" rx="25" fill="#e8e8e8"/>
<text x="1736.500" y="38.500" class="b" font-size="18" style="fill:#111" textLength="126" lengthAdjust="spacingAndGlyphs">Sign up to save</text>
</svg>
</body></html>
